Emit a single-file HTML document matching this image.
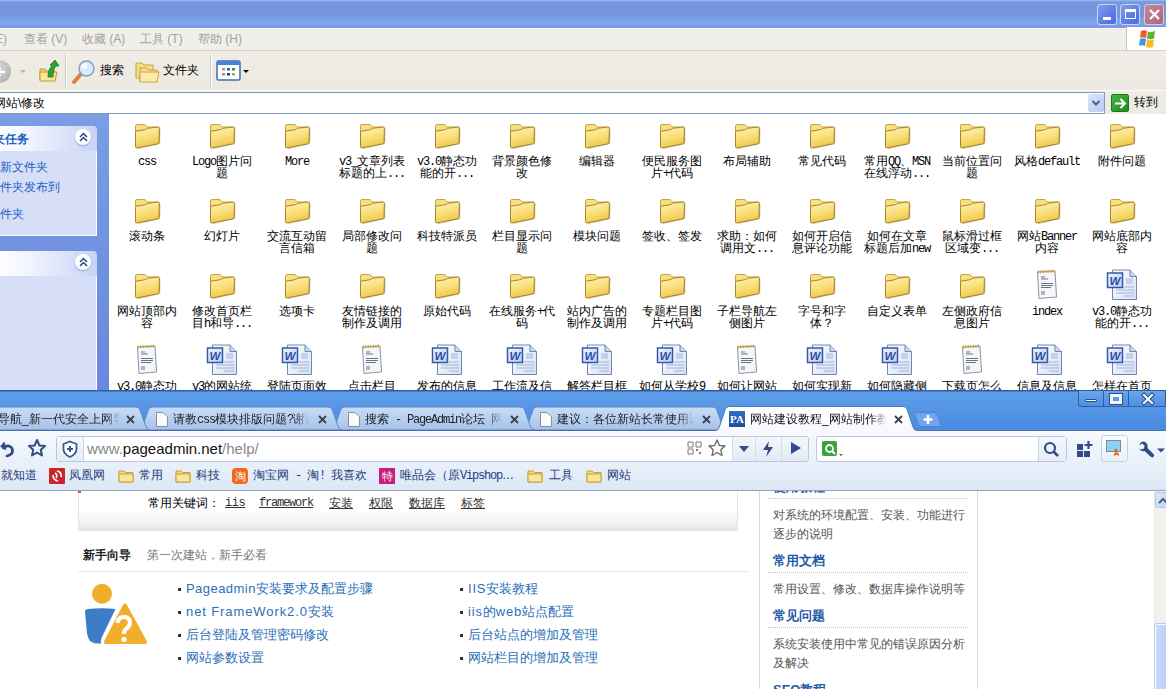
<!DOCTYPE html>
<html><head><meta charset="utf-8">
<style>
*{box-sizing:border-box}
html,body{margin:0;padding:0}
body{width:1166px;height:689px;overflow:hidden;position:relative;background:#fff;font-family:"Liberation Sans",sans-serif;font-size:12px;color:#000}
.a{position:absolute}
.ic{position:absolute;overflow:visible}
.lb{position:absolute;width:76px;text-align:center;font-family:"Liberation Mono",monospace;font-size:12px;line-height:12px;color:#000;white-space:nowrap}
.ml{letter-spacing:-1.2px}
#xtitle{left:0;top:0;width:1166px;height:28px;background:linear-gradient(to bottom,#9abaf4 0,#7898e0 2px,#7494dd 8px,#7595df 16px,#79a0e6 19px,#80a7ee 24px,#7b95e2 27px,#8a9fe6 28px)}
.tb{position:absolute;top:4px;width:20px;height:21px;border:1px solid #c7d6f8;border-radius:3px;background:linear-gradient(135deg,#7f9ef0,#5577e0 70%,#4f6fd8)}
#xmenu{left:0;top:28px;width:1166px;height:23px;background:#f0efe9;border-top:1px solid #f7f6f3;border-bottom:1px solid #d6d3c6}
.mi{position:absolute;top:5px;color:#a3a29c;font-size:12px;line-height:14px;white-space:nowrap}
#xtool{left:0;top:51px;width:1166px;height:39px;background:linear-gradient(to bottom,#efede6,#ebe9e0)}
.sep{position:absolute;width:2px;border-left:1px solid #cfccbe;border-right:1px solid #fff}
#xaddr{left:0;top:90px;width:1166px;height:24px;background:#edebe3;border-top:1px solid #fdfdfb}
#xleft{left:0;top:114px;width:109px;height:276px;background:linear-gradient(to bottom,#7b9de4,#7090e0 60%,#6a88de)}
.ph{position:absolute;left:-6px;width:103px;height:25px;border-radius:0 4px 0 0;background:linear-gradient(to right,#ffffff 0,#f1f4fd 35%,#c6d3f6 100%)}
.pb{position:absolute;left:-6px;width:103px;background:#d6dff7;border:1px solid #fff;border-top:0}
.chev{position:absolute;left:81px;top:3px;width:16px;height:16px;border-radius:50%;background:#fff;box-shadow:0 1px 2px #8fa4d8}
.pl{position:absolute;color:#215dc6;font-size:12px;line-height:14px;white-space:nowrap}
#bframe{left:0;top:390px;width:1166px;height:41px;background:linear-gradient(to bottom,#2e5da6 0,#2e5da6 1px,#5d9ce9 2px,#5696e6 18px,#4b8be1 40px,#3c6fb8 41px)}
.tab{position:absolute;top:407px;height:24px}
.ttx{position:absolute;top:5px;font-size:12px;line-height:14px;white-space:nowrap;color:#1a1a1a;overflow:hidden;-webkit-mask-image:linear-gradient(to right,#000 calc(100% - 16px),transparent 100%);mask-image:linear-gradient(to right,#000 calc(100% - 16px),transparent 100%)}
#btool{left:0;top:430px;width:1166px;height:61px;background:linear-gradient(to bottom,#f7fafd 0,#eaf1fa 30px,#dce7f6 60px,#98a4b4 60px)}
.bk{position:absolute;top:468px;font-size:12px;line-height:12px;white-space:nowrap;color:#1f3a78}
.lk{position:absolute;font-size:13px;line-height:15px;color:#2a6fb8;white-space:nowrap}
.bul{position:absolute;width:3px;height:3px;background:#333}
i{font-style:normal;display:inline-block;width:1em;text-align:center;text-decoration:inherit}
</style></head><body>
<svg width="0" height="0" style="position:absolute">
<defs>
<linearGradient id="fg" x1="0" y1="0" x2="0.3" y2="1"><stop offset="0" stop-color="#fff4b8"/><stop offset="0.55" stop-color="#f9e07e"/><stop offset="1" stop-color="#efc84a"/></linearGradient>
<linearGradient id="fb" x1="0" y1="0" x2="0" y2="1"><stop offset="0" stop-color="#fbe7a0"/><stop offset="1" stop-color="#e9c65a"/></linearGradient>
<linearGradient id="wg" x1="0" y1="0" x2="1" y2="1"><stop offset="0" stop-color="#ffffff"/><stop offset="1" stop-color="#d5e0f3"/></linearGradient>
<linearGradient id="wb" x1="0" y1="0" x2="1" y2="1"><stop offset="0" stop-color="#f4f7fd"/><stop offset="1" stop-color="#b8cbef"/></linearGradient>
<symbol id="fold" viewBox="0 0 27 25">
<path d="M1.5,8 V2 Q1.5,0.5 3,0.5 H10 Q11,0.5 12,1.5 L13.5,3 H23.5 Q25,3 25,4.5 V18 L1.5,22 Z" fill="#f8df80" stroke="#c9a443" stroke-width="1"/>
<path d="M1.5,8.5 Q1.5,7 3,7 L10.5,5.8 Q12.3,5.5 13.5,4.3 L24,3 Q25.4,2.9 25.4,4.2 L25,18.5 Q25,19.6 23.9,19.8 L3,23.9 Q1.5,24.2 1.5,22.6 Z" fill="url(#fg)" stroke="#a98525" stroke-width="1"/>
<path d="M26,4.5 L25.7,19.7 L4,24.6" stroke="#8f7a45" stroke-width="0.9" fill="none" opacity=".45"/>
</symbol>
<symbol id="note" viewBox="0 0 32 32">
<path d="M6.5,3 L24,2 L25.5,28 L8,29.5 Z" fill="#f5f6f9" stroke="#8c93a3"/>
<path d="M6.5,3 L24,2" stroke="#c7a545" stroke-width="2.6" stroke-dasharray="1.6,0.9"/>
<path d="M10,8 H14 M10,10 H17 M10,14.5 H22 M10,16.5 H22 M10,18.5 H20 M10,23 H14 M10,25 H14" stroke="#6b7283" stroke-width="1"/>
</symbol>
<symbol id="word" viewBox="0 0 32 32">
<path d="M6.5,1 H24 L30.5,7.5 V30.5 H6.5 Z" fill="url(#wg)" stroke="#6f86b5"/>
<path d="M24,1 V7.5 H30.5" fill="#c8d6ee" stroke="#6f86b5"/>
<rect x="20" y="9" width="7" height="6" fill="#c3d2ec"/>
<path d="M18,18 H28 M10,21 H28 M10,24 H28 M18,27 H28" stroke="#9fb4d8"/>
<rect x="1.5" y="4" width="15" height="14.5" fill="url(#wb)" stroke="#3558ad" stroke-width="1.5"/>
<text x="9" y="16" font-family="Liberation Sans" font-weight="bold" font-style="italic" font-size="11.5" fill="#2a4ea6" text-anchor="middle">W</text>
</symbol>
</defs></svg>

<!-- ========== EXPLORER ========== -->
<div id="xtitle" class="a"></div>
<div class="tb" style="left:1097px"><div class="a" style="left:5px;top:12px;width:8px;height:3px;background:#fff"></div></div>
<div class="tb" style="left:1120px"><div class="a" style="left:4px;top:4px;width:11px;height:10px;border:1px solid #fff;border-top:3px solid #fff"></div></div>
<div class="tb" style="left:1144px;background:linear-gradient(135deg,#c58aa0,#b56f84 70%,#aa6479);border-color:#e2c8d6"><svg class="a" style="left:3px;top:3px" width="13" height="13"><path d="M2,2 L11,11 M11,2 L2,11" stroke="#fff" stroke-width="2.2"/></svg></div>

<div id="xmenu" class="a"></div>
<div class="mi" style="left:-9px;top:32px">(E)</div>
<div class="mi" style="left:24px;top:32px"><i>查</i><i>看</i> (V)</div>
<div class="mi" style="left:82px;top:32px"><i>收</i><i>藏</i> (A)</div>
<div class="mi" style="left:140px;top:32px"><i>工</i><i>具</i> (T)</div>
<div class="mi" style="left:198px;top:32px"><i>帮</i><i>助</i> (H)</div>
<div class="a" style="left:1126px;top:27px;width:1px;height:23px;background:#c9c5b4"></div>
<div class="a" style="left:1127px;top:27px;width:39px;height:23px;background:#fff"></div>
<svg class="a" style="left:1137px;top:29px" width="22" height="20" viewBox="0 0 22 20">
<path d="M4,2 Q7,0.5 10,2 L9,9 Q6,7.5 3,9 Z" fill="#ee5a24"/>
<path d="M11,2.5 Q14,4 18,2 L17,9.5 Q13.5,11 10,9.5 Z" fill="#5db22e"/>
<path d="M3,10 Q6,8.5 9,10 L8,17 Q5,15.5 2,17 Z" fill="#3b9ae4"/>
<path d="M10,10.5 Q13.5,12 17,10.5 L16,18 Q12.5,19.5 9,18 Z" fill="#f5be1b"/>
</svg>

<div id="xtool" class="a"></div>
<div class="a" style="left:-12px;top:60px;width:23px;height:23px;border-radius:50%;background:radial-gradient(circle at 40% 35%,#dcdcdc,#a6a6a6)"></div><svg class="a" style="left:-6px;top:65px" width="14" height="14"><path d="M11,7 H3 M6.5,3 L2.5,7 L6.5,11" stroke="#fff" stroke-width="2.4" fill="none"/></svg>
<div class="a" style="left:20px;top:70px;width:0;height:0;border-left:3px solid transparent;border-right:3px solid transparent;border-top:3px solid #b5b5b5"></div>
<svg class="a" style="left:38px;top:59px" width="22" height="24" viewBox="0 0 22 24">
<path d="M2,10 H7 L9,12 H17 V21 H2 Z" fill="#f3d36a" stroke="#c49a2f"/>
<path d="M2,13 H19 L17,22 H2 Z" fill="#f9e596" stroke="#c49a2f"/>
<path d="M10,18 Q10,10 14,7 L12,6 L17,1 L21,7 L18,7 Q15,10 15,18 Z" fill="#2fa32f" stroke="#1b7a1b" stroke-width="0.8"/>
</svg>
<div class="sep" style="left:65px;top:54px;height:34px"></div>
<svg class="a" style="left:71px;top:59px" width="26" height="26" viewBox="0 0 26 26">
<line x1="3" y1="23" x2="10" y2="15" stroke="#d9843a" stroke-width="4" stroke-linecap="round"/>
<circle cx="15.5" cy="9.5" r="7.5" fill="#d4ecfb" stroke="#7c9ec6" stroke-width="1.4"/>
<circle cx="13.5" cy="7.5" r="3" fill="#fff" opacity=".8"/>
</svg>
<div class="a" style="left:100px;top:64px;font-size:12px;line-height:13px;color:#000"><i>搜</i><i>索</i></div>
<svg class="a" style="left:135px;top:60px" width="26" height="24" viewBox="0 0 26 24">
<path d="M1,3 H7 L9,5 H18 V18 H1 Z" fill="#f5dc86" stroke="#c7a23e"/>
<path d="M5,8 H11 L13,10 H22 V21 H5 Z" fill="#f7e08e" stroke="#c7a23e"/>
<path d="M5,12 H24 L22,22 H5 Z" fill="#fbeaa8" stroke="#c7a23e"/>
</svg>
<div class="a" style="left:163px;top:64px;font-size:12px;line-height:13px;color:#000"><i>文</i><i>件</i><i>夹</i></div>
<div class="sep" style="left:210px;top:54px;height:34px"></div>
<svg class="a" style="left:216px;top:60px" width="26" height="22" viewBox="0 0 26 22">
<rect x="1" y="1" width="23" height="19" rx="1.5" fill="#fff" stroke="#3a6cc0" stroke-width="1.5"/>
<rect x="1" y="1" width="23" height="4" fill="#4d7fd3"/>
<rect x="6" y="8" width="3" height="2.5" fill="#8a98c8"/><rect x="11" y="8" width="3" height="2.5" fill="#2c62c0"/><rect x="16" y="8" width="3" height="2.5" fill="#2f9a42"/>
<rect x="6" y="13" width="3" height="2.5" fill="#e07a4a"/><rect x="11" y="13" width="3" height="2.5" fill="#233f95"/><rect x="16" y="13" width="3" height="2.5" fill="#c9a23e"/>
</svg>
<div class="a" style="left:243px;top:70px;width:0;height:0;border-left:3px solid transparent;border-right:3px solid transparent;border-top:3px solid #000"></div>

<div id="xaddr" class="a"></div>
<div class="a" style="left:-2px;top:92px;width:1107px;height:22px;background:#fff;border:1px solid #7f9db9"></div>
<div class="a" style="left:-6px;top:97px;font-size:12px;line-height:13px"><i>网</i><i>站</i>\<i>修</i><i>改</i></div>
<div class="a" style="left:1088px;top:94px;width:16px;height:18px;border-radius:2px;background:linear-gradient(135deg,#dbe4fb,#b9cbf5)"><svg class="a" style="left:3px;top:5px" width="10" height="8"><path d="M1.5,2 L5,5.5 L8.5,2" stroke="#4d6185" stroke-width="2" fill="none"/></svg></div>
<div class="a" style="left:1111px;top:94px;width:18px;height:18px;border-radius:2px;background:linear-gradient(135deg,#43b843,#1c8c1c);border:1px solid #1b7a1b"><svg class="a" style="left:2px;top:2px" width="13" height="13"><path d="M1,6.5 H11 M6.5,2 L11,6.5 L6.5,11" stroke="#fff" stroke-width="2" fill="none"/></svg></div>
<div class="a" style="left:1134px;top:96px;font-size:12px;line-height:13px"><i>转</i><i>到</i></div>

<div id="xleft" class="a"></div>
<div class="ph" style="top:126px"><div class="a" style="left:-1px;top:6px;font-weight:bold;color:#215dc6;font-size:12px;line-height:14px"><i>夹</i><i>任</i><i>务</i></div><div class="chev"><svg class="a" style="left:4px;top:3px" width="9" height="11"><path d="M1,5 L4.5,1.5 L8,5 M1,9 L4.5,5.5 L8,9" stroke="#28428a" stroke-width="1.5" fill="none"/></svg></div></div>
<div class="pb" style="top:151px;height:85px"></div>
<div class="pl" style="left:0;top:160px"><i>新</i><i>文</i><i>件</i><i>夹</i></div>
<div class="pl" style="left:0px;top:180px"><i>件</i><i>夹</i><i>发</i><i>布</i><i>到</i></div>
<div class="pl" style="left:0px;top:207px"><i>件</i><i>夹</i></div>
<div class="ph" style="top:251px"><div class="chev"><svg class="a" style="left:4px;top:3px" width="9" height="11"><path d="M1,5 L4.5,1.5 L8,5 M1,9 L4.5,5.5 L8,9" stroke="#28428a" stroke-width="1.5" fill="none"/></svg></div></div>
<div class="pb" style="top:276px;height:120px"></div>

<div class="a" style="left:109px;top:114px;width:1057px;height:276px;background:#fff;overflow:hidden">
<div class="a" style="left:-109px;top:-114px;width:1166px;height:390px">
<svg class="ic" style="left:134px;top:124px" width="27" height="25"><use href="#fold"/></svg><div class="lb" style="left:109px;top:156px"><span class="ml">css</span></div>
<svg class="ic" style="left:209px;top:124px" width="27" height="25"><use href="#fold"/></svg><div class="lb" style="left:184px;top:156px"><span class="ml">Logo</span><i>图</i><i>片</i><i>问</i><br><i>题</i></div>
<svg class="ic" style="left:284px;top:124px" width="27" height="25"><use href="#fold"/></svg><div class="lb" style="left:259px;top:156px"><span class="ml">More</span></div>
<svg class="ic" style="left:359px;top:124px" width="27" height="25"><use href="#fold"/></svg><div class="lb" style="left:334px;top:156px"><span class="ml">v3_</span><i>文</i><i>章</i><i>列</i><i>表</i><br><i>标</i><i>题</i><i>的</i><i>上</i><span class="ml">...</span></div>
<svg class="ic" style="left:434px;top:124px" width="27" height="25"><use href="#fold"/></svg><div class="lb" style="left:409px;top:156px"><span class="ml">v3.0</span><i>静</i><i>态</i><i>功</i><br><i>能</i><i>的</i><i>开</i><span class="ml">...</span></div>
<svg class="ic" style="left:509px;top:124px" width="27" height="25"><use href="#fold"/></svg><div class="lb" style="left:484px;top:156px"><i>背</i><i>景</i><i>颜</i><i>色</i><i>修</i><br><i>改</i></div>
<svg class="ic" style="left:584px;top:124px" width="27" height="25"><use href="#fold"/></svg><div class="lb" style="left:559px;top:156px"><i>编</i><i>辑</i><i>器</i></div>
<svg class="ic" style="left:659px;top:124px" width="27" height="25"><use href="#fold"/></svg><div class="lb" style="left:634px;top:156px"><i>便</i><i>民</i><i>服</i><i>务</i><i>图</i><br><i>片</i><span class="ml">+</span><i>代</i><i>码</i></div>
<svg class="ic" style="left:734px;top:124px" width="27" height="25"><use href="#fold"/></svg><div class="lb" style="left:709px;top:156px"><i>布</i><i>局</i><i>辅</i><i>助</i></div>
<svg class="ic" style="left:809px;top:124px" width="27" height="25"><use href="#fold"/></svg><div class="lb" style="left:784px;top:156px"><i>常</i><i>见</i><i>代</i><i>码</i></div>
<svg class="ic" style="left:884px;top:124px" width="27" height="25"><use href="#fold"/></svg><div class="lb" style="left:859px;top:156px"><i>常</i><i>用</i><span class="ml">QQ</span><i>、</i><span class="ml">MSN</span><br><i>在</i><i>线</i><i>浮</i><i>动</i><span class="ml">...</span></div>
<svg class="ic" style="left:959px;top:124px" width="27" height="25"><use href="#fold"/></svg><div class="lb" style="left:934px;top:156px"><i>当</i><i>前</i><i>位</i><i>置</i><i>问</i><br><i>题</i></div>
<svg class="ic" style="left:1034px;top:124px" width="27" height="25"><use href="#fold"/></svg><div class="lb" style="left:1009px;top:156px"><i>风</i><i>格</i><span class="ml">default</span></div>
<svg class="ic" style="left:1109px;top:124px" width="27" height="25"><use href="#fold"/></svg><div class="lb" style="left:1084px;top:156px"><i>附</i><i>件</i><i>问</i><i>题</i></div>
<svg class="ic" style="left:134px;top:199px" width="27" height="25"><use href="#fold"/></svg><div class="lb" style="left:109px;top:231px"><i>滚</i><i>动</i><i>条</i></div>
<svg class="ic" style="left:209px;top:199px" width="27" height="25"><use href="#fold"/></svg><div class="lb" style="left:184px;top:231px"><i>幻</i><i>灯</i><i>片</i></div>
<svg class="ic" style="left:284px;top:199px" width="27" height="25"><use href="#fold"/></svg><div class="lb" style="left:259px;top:231px"><i>交</i><i>流</i><i>互</i><i>动</i><i>留</i><br><i>言</i><i>信</i><i>箱</i></div>
<svg class="ic" style="left:359px;top:199px" width="27" height="25"><use href="#fold"/></svg><div class="lb" style="left:334px;top:231px"><i>局</i><i>部</i><i>修</i><i>改</i><i>问</i><br><i>题</i></div>
<svg class="ic" style="left:434px;top:199px" width="27" height="25"><use href="#fold"/></svg><div class="lb" style="left:409px;top:231px"><i>科</i><i>技</i><i>特</i><i>派</i><i>员</i></div>
<svg class="ic" style="left:509px;top:199px" width="27" height="25"><use href="#fold"/></svg><div class="lb" style="left:484px;top:231px"><i>栏</i><i>目</i><i>显</i><i>示</i><i>问</i><br><i>题</i></div>
<svg class="ic" style="left:584px;top:199px" width="27" height="25"><use href="#fold"/></svg><div class="lb" style="left:559px;top:231px"><i>模</i><i>块</i><i>问</i><i>题</i></div>
<svg class="ic" style="left:659px;top:199px" width="27" height="25"><use href="#fold"/></svg><div class="lb" style="left:634px;top:231px"><i>签</i><i>收</i><i>、</i><i>签</i><i>发</i></div>
<svg class="ic" style="left:734px;top:199px" width="27" height="25"><use href="#fold"/></svg><div class="lb" style="left:709px;top:231px"><i>求</i><i>助</i><i>：</i><i>如</i><i>何</i><br><i>调</i><i>用</i><i>文</i><span class="ml">...</span></div>
<svg class="ic" style="left:809px;top:199px" width="27" height="25"><use href="#fold"/></svg><div class="lb" style="left:784px;top:231px"><i>如</i><i>何</i><i>开</i><i>启</i><i>信</i><br><i>息</i><i>评</i><i>论</i><i>功</i><i>能</i></div>
<svg class="ic" style="left:884px;top:199px" width="27" height="25"><use href="#fold"/></svg><div class="lb" style="left:859px;top:231px"><i>如</i><i>何</i><i>在</i><i>文</i><i>章</i><br><i>标</i><i>题</i><i>后</i><i>加</i><span class="ml">new</span></div>
<svg class="ic" style="left:959px;top:199px" width="27" height="25"><use href="#fold"/></svg><div class="lb" style="left:934px;top:231px"><i>鼠</i><i>标</i><i>滑</i><i>过</i><i>框</i><br><i>区</i><i>域</i><i>变</i><span class="ml">...</span></div>
<svg class="ic" style="left:1034px;top:199px" width="27" height="25"><use href="#fold"/></svg><div class="lb" style="left:1009px;top:231px"><i>网</i><i>站</i><span class="ml">Banner</span><br><i>内</i><i>容</i></div>
<svg class="ic" style="left:1109px;top:199px" width="27" height="25"><use href="#fold"/></svg><div class="lb" style="left:1084px;top:231px"><i>网</i><i>站</i><i>底</i><i>部</i><i>内</i><br><i>容</i></div>
<svg class="ic" style="left:134px;top:274px" width="27" height="25"><use href="#fold"/></svg><div class="lb" style="left:109px;top:306px"><i>网</i><i>站</i><i>顶</i><i>部</i><i>内</i><br><i>容</i></div>
<svg class="ic" style="left:209px;top:274px" width="27" height="25"><use href="#fold"/></svg><div class="lb" style="left:184px;top:306px"><i>修</i><i>改</i><i>首</i><i>页</i><i>栏</i><br><i>目</i><span class="ml">h</span><i>和</i><i>导</i><span class="ml">...</span></div>
<svg class="ic" style="left:284px;top:274px" width="27" height="25"><use href="#fold"/></svg><div class="lb" style="left:259px;top:306px"><i>选</i><i>项</i><i>卡</i></div>
<svg class="ic" style="left:359px;top:274px" width="27" height="25"><use href="#fold"/></svg><div class="lb" style="left:334px;top:306px"><i>友</i><i>情</i><i>链</i><i>接</i><i>的</i><br><i>制</i><i>作</i><i>及</i><i>调</i><i>用</i></div>
<svg class="ic" style="left:434px;top:274px" width="27" height="25"><use href="#fold"/></svg><div class="lb" style="left:409px;top:306px"><i>原</i><i>始</i><i>代</i><i>码</i></div>
<svg class="ic" style="left:509px;top:274px" width="27" height="25"><use href="#fold"/></svg><div class="lb" style="left:484px;top:306px"><i>在</i><i>线</i><i>服</i><i>务</i><span class="ml">+</span><i>代</i><br><i>码</i></div>
<svg class="ic" style="left:584px;top:274px" width="27" height="25"><use href="#fold"/></svg><div class="lb" style="left:559px;top:306px"><i>站</i><i>内</i><i>广</i><i>告</i><i>的</i><br><i>制</i><i>作</i><i>及</i><i>调</i><i>用</i></div>
<svg class="ic" style="left:659px;top:274px" width="27" height="25"><use href="#fold"/></svg><div class="lb" style="left:634px;top:306px"><i>专</i><i>题</i><i>栏</i><i>目</i><i>图</i><br><i>片</i><span class="ml">+</span><i>代</i><i>码</i></div>
<svg class="ic" style="left:734px;top:274px" width="27" height="25"><use href="#fold"/></svg><div class="lb" style="left:709px;top:306px"><i>子</i><i>栏</i><i>导</i><i>航</i><i>左</i><br><i>侧</i><i>图</i><i>片</i></div>
<svg class="ic" style="left:809px;top:274px" width="27" height="25"><use href="#fold"/></svg><div class="lb" style="left:784px;top:306px"><i>字</i><i>号</i><i>和</i><i>字</i><br><i>体</i><i>？</i></div>
<svg class="ic" style="left:884px;top:274px" width="27" height="25"><use href="#fold"/></svg><div class="lb" style="left:859px;top:306px"><i>自</i><i>定</i><i>义</i><i>表</i><i>单</i></div>
<svg class="ic" style="left:959px;top:274px" width="27" height="25"><use href="#fold"/></svg><div class="lb" style="left:934px;top:306px"><i>左</i><i>侧</i><i>政</i><i>府</i><i>信</i><br><i>息</i><i>图</i><i>片</i></div>
<svg class="ic" style="left:1031px;top:269px" width="32" height="32"><use href="#note"/></svg><div class="lb" style="left:1009px;top:306px"><span class="ml">index</span></div>
<svg class="ic" style="left:1106px;top:269px" width="32" height="32"><use href="#word"/></svg><div class="lb" style="left:1084px;top:306px"><span class="ml">v3.0</span><i>静</i><i>态</i><i>功</i><br><i>能</i><i>的</i><i>开</i><span class="ml">...</span></div>
<svg class="ic" style="left:131px;top:344px" width="32" height="32"><use href="#note"/></svg><div class="lb" style="left:109px;top:381px"><span class="ml">v3.0</span><i>静</i><i>态</i><i>功</i></div>
<svg class="ic" style="left:206px;top:344px" width="32" height="32"><use href="#word"/></svg><div class="lb" style="left:184px;top:381px"><span class="ml">v3</span><i>的</i><i>网</i><i>站</i><i>统</i></div>
<svg class="ic" style="left:281px;top:344px" width="32" height="32"><use href="#word"/></svg><div class="lb" style="left:259px;top:381px"><i>登</i><i>陆</i><i>页</i><i>面</i><i>效</i></div>
<svg class="ic" style="left:356px;top:344px" width="32" height="32"><use href="#note"/></svg><div class="lb" style="left:334px;top:381px"><i>点</i><i>击</i><i>栏</i><i>目</i></div>
<svg class="ic" style="left:431px;top:344px" width="32" height="32"><use href="#word"/></svg><div class="lb" style="left:409px;top:381px"><i>发</i><i>布</i><i>的</i><i>信</i><i>息</i></div>
<svg class="ic" style="left:506px;top:344px" width="32" height="32"><use href="#word"/></svg><div class="lb" style="left:484px;top:381px"><i>工</i><i>作</i><i>流</i><i>及</i><i>信</i></div>
<svg class="ic" style="left:581px;top:344px" width="32" height="32"><use href="#word"/></svg><div class="lb" style="left:559px;top:381px"><i>解</i><i>答</i><i>栏</i><i>目</i><i>框</i></div>
<svg class="ic" style="left:656px;top:344px" width="32" height="32"><use href="#word"/></svg><div class="lb" style="left:634px;top:381px"><i>如</i><i>何</i><i>从</i><i>学</i><i>校</i><span class="ml">9</span></div>
<svg class="ic" style="left:731px;top:344px" width="32" height="32"><use href="#note"/></svg><div class="lb" style="left:709px;top:381px"><i>如</i><i>何</i><i>让</i><i>网</i><i>站</i></div>
<svg class="ic" style="left:806px;top:344px" width="32" height="32"><use href="#word"/></svg><div class="lb" style="left:784px;top:381px"><i>如</i><i>何</i><i>实</i><i>现</i><i>新</i></div>
<svg class="ic" style="left:881px;top:344px" width="32" height="32"><use href="#word"/></svg><div class="lb" style="left:859px;top:381px"><i>如</i><i>何</i><i>隐</i><i>藏</i><i>侧</i></div>
<svg class="ic" style="left:956px;top:344px" width="32" height="32"><use href="#note"/></svg><div class="lb" style="left:934px;top:381px"><i>下</i><i>载</i><i>页</i><i>怎</i><i>么</i></div>
<svg class="ic" style="left:1031px;top:344px" width="32" height="32"><use href="#word"/></svg><div class="lb" style="left:1009px;top:381px"><i>信</i><i>息</i><i>及</i><i>信</i><i>息</i></div>
<svg class="ic" style="left:1106px;top:344px" width="32" height="32"><use href="#word"/></svg><div class="lb" style="left:1084px;top:381px"><i>怎</i><i>样</i><i>在</i><i>首</i><i>页</i></div>
</div></div>

<!-- ========== BROWSER ========== -->
<div id="bframe" class="a"></div>
<div class="a" style="left:1078px;top:391px;width:88px;height:16px;border:1px solid #2f5fa3;border-top:0;border-radius:0 0 0 3px;background:linear-gradient(to bottom,#6aa5ec,#4f8fe3)"></div>
<div class="a" style="left:1103px;top:391px;width:1px;height:16px;background:#2f5fa3"></div>
<div class="a" style="left:1128px;top:391px;width:1px;height:16px;background:#2f5fa3"></div>
<div class="a" style="left:1085px;top:399px;width:12px;height:3px;background:#f3f6fb;border:1px solid #2c4f86;border-radius:1px"></div>
<div class="a" style="left:1110px;top:394px;width:12px;height:10px;border:3px solid #f3f6fb;outline:1px solid #2c4f86"></div>
<svg class="a" style="left:1141px;top:392px" width="14" height="14"><path d="M3,3 L11,11 M11,3 L3,11" stroke="#2c4f86" stroke-width="4.2" stroke-linecap="square"/><path d="M3,3 L11,11 M11,3 L3,11" stroke="#f3f6fb" stroke-width="2.2" stroke-linecap="square"/></svg>

<div id="btool" class="a"></div>
<svg class="a" style="left:0;top:405px" width="1166" height="27">
<defs><linearGradient id="tgi" x1="0" y1="0" x2="0" y2="1"><stop offset="0" stop-color="#c9ddf6"/><stop offset="1" stop-color="#a6c2eb"/></linearGradient>
<linearGradient id="tga" x1="0" y1="0" x2="0" y2="1"><stop offset="0" stop-color="#ffffff"/><stop offset="1" stop-color="#f6f9fd"/></linearGradient></defs>
<path d="M522.9,25 Q525.9,25 526.9,22 L532.9,5 Q533.9,2 536.9,2 H712.9 Q715.9,2 716.9,5 L722.9,22 Q723.9,25 726.9,25 Z" fill="url(#tgi)" stroke="#5f86c0" stroke-width="1"/>
<path d="M330.6,25 Q333.6,25 334.6,22 L340.6,5 Q341.6,2 344.6,2 H520.6 Q523.6,2 524.6,5 L530.6,22 Q531.6,25 534.6,25 Z" fill="url(#tgi)" stroke="#5f86c0" stroke-width="1"/>
<path d="M138.3,25 Q141.3,25 142.3,22 L148.3,5 Q149.3,2 152.3,2 H328.3 Q331.3,2 332.3,5 L338.3,22 Q339.3,25 342.3,25 Z" fill="url(#tgi)" stroke="#5f86c0" stroke-width="1"/>
<path d="M-54.0,25 Q-51.0,25 -50.0,22 L-44.0,5 Q-43.0,2 -40.0,2 H136.0 Q139.0,2 140.0,5 L146.0,22 Q147.0,25 150.0,25 Z" fill="url(#tgi)" stroke="#5f86c0" stroke-width="1"/>
<path d="M915,7.5 H934.5 Q936,7.5 937,9.5 L941,20 Q941.5,21.5 940,21.5 H921 Q919.5,21.5 919,20 L914.5,9.5 Q914,7.5 915,7.5 Z" fill="#72a6ec" stroke="#4f80c9" stroke-width="0.8"/>
<path d="M923.5,14.5 H932.5 M928,10 V19" stroke="#fff" stroke-width="2.6"/>
<path d="M0,25.5 H1166" stroke="#4a70a8" stroke-width="1"/>
<path d="M715.2,25.5 Q718.2,25.5 719.2,22.5 L725.2,4.5 Q726.2,1.5 729.2,1.5 H903.2 Q906.2,1.5 907.2,4.5 L913.2,22.5 Q914.2,25.5 917.2,25.5 V27 H715.2 Z" fill="url(#tga)"/><path d="M715.2,25.5 Q718.2,25.5 719.2,22.5 L725.2,4.5 Q726.2,1.5 729.2,1.5 H903.2 Q906.2,1.5 907.2,4.5 L913.2,22.5 Q914.2,25.5 917.2,25.5" fill="none" stroke="#4d78b8" stroke-width="1"/>
</svg>
<div class="ttx" style="left:-2px;top:412px;width:123px;color:#222"><i>导</i><i>航</i>_<i>新</i><i>一</i><i>代</i><i>安</i><i>全</i><i>上</i><i>网</i><i>导</i></div>
<svg class="a" style="left:126px;top:415px" width="9" height="9"><path d="M1,1 L8,8 M8,1 L1,8" stroke="#3a4150" stroke-width="1.8"/></svg>
<svg class="a" style="left:156px;top:412px" width="12" height="15"><path d="M0.5,0.5 H7 L11.5,5 V14.5 H0.5 Z" fill="#fbfbfb" stroke="#8d8f94"/></svg>
<div class="ttx" style="left:173px;top:412px;width:137px;color:#222"><i>请</i><i>教</i><span style="font-family:'Liberation Mono',monospace;letter-spacing:-1.2px">css</span><i>模</i><i>块</i><i>排</i><i>版</i><i>问</i><i>题</i><span style="font-family:'Liberation Mono',monospace;letter-spacing:-1.2px">?</span><i>谢</i><i>谢</i></div>
<svg class="a" style="left:318px;top:415px" width="9" height="9"><path d="M1,1 L8,8 M8,1 L1,8" stroke="#3a4150" stroke-width="1.8"/></svg>
<svg class="a" style="left:348px;top:412px" width="12" height="15"><path d="M0.5,0.5 H7 L11.5,5 V14.5 H0.5 Z" fill="#fbfbfb" stroke="#8d8f94"/></svg>
<div class="ttx" style="left:365px;top:412px;width:137px;color:#222"><i>搜</i><i>索</i><span style="font-family:'Liberation Mono',monospace;letter-spacing:-1.2px"> - PageAdmin</span><i>论</i><i>坛</i><span style="font-family:'Liberation Mono',monospace;letter-spacing:-1.2px"> </span><i>网</i><i>站</i></div>
<svg class="a" style="left:510px;top:415px" width="9" height="9"><path d="M1,1 L8,8 M8,1 L1,8" stroke="#3a4150" stroke-width="1.8"/></svg>
<svg class="a" style="left:540px;top:412px" width="12" height="15"><path d="M0.5,0.5 H7 L11.5,5 V14.5 H0.5 Z" fill="#fbfbfb" stroke="#8d8f94"/></svg>
<div class="ttx" style="left:557px;top:412px;width:137px;color:#222"><i>建</i><i>议</i><i>：</i><i>各</i><i>位</i><i>新</i><i>站</i><i>长</i><i>常</i><i>使</i><i>用</i><i>该</i></div>
<svg class="a" style="left:702px;top:415px" width="9" height="9"><path d="M1,1 L8,8 M8,1 L1,8" stroke="#3a4150" stroke-width="1.8"/></svg>
<div class="a" style="left:729px;top:411px;width:16px;height:16px;background:linear-gradient(to bottom,#2f6fc6,#1d4f9a);color:#fff;font-size:11px;font-weight:bold;line-height:16px;text-align:center;font-family:'Liberation Serif',serif;letter-spacing:0px">PA</div>
<div class="ttx" style="left:750px;top:412px;width:137px;color:#111"><i>网</i><i>站</i><i>建</i><i>设</i><i>教</i><i>程</i>_<i>网</i><i>站</i><i>制</i><i>作</i><i>教</i><i>程</i></div>
<svg class="a" style="left:894px;top:415px" width="9" height="9"><path d="M1,1 L8,8 M8,1 L1,8" stroke="#3a4150" stroke-width="1.8"/></svg>
<svg class="a" style="left:0;top:440px" width="16" height="18"><path d="M3.5,8 Q6,5.5 9,6 Q12.5,7 12.5,11 Q12.5,14.5 7,16" stroke="#2e4d86" stroke-width="2.8" fill="none" stroke-linecap="round"/><path d="M0,6.5 L4.5,1.5 L6.5,10.5 Z" fill="#2e4d86"/></svg>
<svg class="a" style="left:27px;top:438px" width="20" height="20"><path d="M10,2 L12.4,7.5 L18,8 L13.8,11.8 L15,17.5 L10,14.5 L5,17.5 L6.2,11.8 L2,8 L7.6,7.5 Z" fill="none" stroke="#2e4d86" stroke-width="2" stroke-linejoin="round"/></svg>
<div class="a" style="left:56px;top:436px;width:753px;height:26px;border:1px solid #b9c8dc;border-radius:3px;background:#fff"></div>
<div class="a" style="left:57px;top:437px;width:27px;height:24px;background:linear-gradient(to bottom,#f5f8fc,#e6edf7);border-right:1px solid #c7d3e3"></div>
<svg class="a" style="left:61px;top:440px" width="18" height="18"><path d="M9,1.5 L15.5,4 V9 Q15.5,14 9,17 Q2.5,14 2.5,9 V4 Z" fill="#fff" stroke="#3a5a8e" stroke-width="1.8"/><path d="M9,6 V12 M6,9 H12" stroke="#3a5a8e" stroke-width="2"/></svg>
<div class="a" style="left:87px;top:440px;font-size:15px;line-height:18px;white-space:nowrap;color:#111"><span style="color:#888">www.</span>pageadmin.net<span style="color:#888">/help/</span></div>
<svg class="a" style="left:687px;top:441px" width="16" height="14"><path d="M1,1h5v5h-5z M9,1h5v5h-5z M1,8h5v5h-5z" fill="none" stroke="#777"/><path d="M9,8h2v2h-2z M12,11h2v2h-2z" fill="#777"/></svg>
<svg class="a" style="left:707px;top:438px" width="20" height="20"><path d="M10,2 L12.4,7.5 L18,8 L13.8,11.8 L15,17.5 L10,14.5 L5,17.5 L6.2,11.8 L2,8 L7.6,7.5 Z" fill="#fff" stroke="#666" stroke-width="1.3" stroke-linejoin="round"/></svg>
<div class="a" style="left:732px;top:437px;width:76px;height:24px;background:linear-gradient(to bottom,#f4f7fb,#e3eaf4);border-radius:0 2px 2px 0"></div><div class="a" style="left:732px;top:437px;width:1px;height:24px;background:#d4dde9"></div>
<div class="a" style="left:755px;top:437px;width:1px;height:24px;background:#d4dde9"></div>
<div class="a" style="left:781px;top:437px;width:1px;height:24px;background:#d4dde9"></div>
<div class="a" style="left:739px;top:446px;width:0;height:0;border-left:5px solid transparent;border-right:5px solid transparent;border-top:6px solid #2e4d86"></div>
<svg class="a" style="left:761px;top:440px" width="14" height="18"><path d="M8,1 L2,10 H7 L5,17 L12,7 H7 Z" fill="#2e4d86"/></svg>
<svg class="a" style="left:790px;top:441px" width="12" height="14"><path d="M1,1 L11,7 L1,13 Z" fill="#2e4d86"/></svg>
<div class="a" style="left:816px;top:436px;width:251px;height:26px;border:1px solid #b9c8dc;border-radius:3px;background:#fff"></div>
<div class="a" style="left:1038px;top:437px;width:28px;height:24px;background:linear-gradient(to bottom,#f5f8fc,#e6edf7);border-left:1px solid #c7d3e3"></div>
<div class="a" style="left:822px;top:441px;width:15px;height:15px;border-radius:2px;background:#3aa33a"></div>
<svg class="a" style="left:824px;top:443px" width="20" height="16"><circle cx="5.5" cy="5.5" r="3.5" fill="none" stroke="#fff" stroke-width="1.8"/><path d="M8,8 L11,11" stroke="#fff" stroke-width="2"/><path d="M15,11 L19,11 L17,13 Z" fill="#555"/></svg>
<svg class="a" style="left:1043px;top:441px" width="18" height="18"><circle cx="7" cy="7" r="5" fill="none" stroke="#2e4d86" stroke-width="2.2"/><path d="M10.5,10.5 L15,15" stroke="#2e4d86" stroke-width="2.6"/></svg>
<svg class="a" style="left:1076px;top:440px" width="18" height="18"><rect x="1" y="4" width="6" height="6" fill="#2e4d86"/><rect x="1" y="11" width="6" height="6" fill="#2e4d86"/><rect x="8" y="11" width="6" height="6" fill="#2e4d86"/><path d="M12.5,1 V9 M8.5,5 H16.5" stroke="#2e4d86" stroke-width="2.2"/></svg>
<div class="a" style="left:1101px;top:435px;width:27px;height:27px;border:1px solid #c6d2e2;border-radius:3px;background:linear-gradient(to bottom,#fbfdff,#e9f0f9)"></div>
<svg class="a" style="left:1105px;top:439px" width="20" height="18"><rect x="1.5" y="1.5" width="14" height="11" fill="#8fd0f5" stroke="#7a8aa0"/><path d="M10,10 Q13,14 9,16 M12,10 Q9,14 14,16" stroke="#d9701e" stroke-width="2" fill="none"/></svg>
<svg class="a" style="left:1138px;top:440px" width="28" height="18"><path d="M6,1.5 Q2,1.5 1.5,5.5 L4,3.5 L6.5,5.5 L6,8.5 L3,9.5 L1.5,8 Q2.5,12 6.5,11 L13,17 Q14.5,18 15.8,16.5 Q16.8,15 15.5,14 L9.5,8 Q10.5,3 6,1.5 Z" fill="#2e4d86"/><path d="M19,8.5 H27 L23,12.5 Z" fill="#2e4d86"/></svg>

<!-- bookmarks -->
<div class="bk" style="top:470px;left:1px;top:469px"><i>就</i><i>知</i><i>道</i></div>
<div class="a" style="left:49px;top:468px;width:16px;height:16px;background:#c8262a;border-radius:1px"><svg class="a" style="left:1px;top:1px" width="14" height="14"><path d="M7,2 Q12,3 11,8 M3,6 Q3,11 8,12 M5,4 Q8,6 6,9" stroke="#fff" stroke-width="1.6" fill="none"/></svg></div>
<div class="bk" style="top:470px;left:69px;top:469px"><i>凤</i><i>凰</i><i>网</i></div>
<svg class="a" style="left:118px;top:469px" width="16" height="14"><path d="M1,2 H6 L7.5,3.5 H15 V13 H1 Z" fill="#f7d97c" stroke="#c79f3b"/><path d="M1,5 H15 V13 H1 Z" fill="#fbe59b" stroke="#c79f3b"/></svg>
<div class="bk" style="top:470px;left:139px;top:469px"><i>常</i><i>用</i></div>
<svg class="a" style="left:175px;top:469px" width="16" height="14"><path d="M1,2 H6 L7.5,3.5 H15 V13 H1 Z" fill="#f7d97c" stroke="#c79f3b"/><path d="M1,5 H15 V13 H1 Z" fill="#fbe59b" stroke="#c79f3b"/></svg>
<div class="bk" style="top:470px;left:196px;top:469px"><i>科</i><i>技</i></div>
<div class="a" style="left:232px;top:468px;width:16px;height:16px;background:#ef6a1c;border-radius:4px;color:#fff;font-size:11px;line-height:16px;text-align:center"><i>淘</i></div>
<div class="bk" style="top:470px;left:253px;top:469px"><i>淘</i><i>宝</i><i>网</i><span style="font-family:'Liberation Mono',monospace;letter-spacing:-1.2px"> - </span><i>淘</i><span style="font-family:'Liberation Mono',monospace;letter-spacing:-1.2px">! </span><i>我</i><i>喜</i><i>欢</i></div>
<div class="a" style="left:379px;top:468px;width:16px;height:16px;background:#cc1a7e;color:#fff;font-size:11px;line-height:16px;text-align:center"><i>特</i></div>
<div class="bk" style="top:470px;left:400px;top:469px"><i>唯</i><i>品</i><i>会</i><i>（</i><i>原</i><span style="font-family:'Liberation Mono',monospace;letter-spacing:-1.2px">Vipshop</span>…</div>
<svg class="a" style="left:527px;top:469px" width="16" height="14"><path d="M1,2 H6 L7.5,3.5 H15 V13 H1 Z" fill="#f7d97c" stroke="#c79f3b"/><path d="M1,5 H15 V13 H1 Z" fill="#fbe59b" stroke="#c79f3b"/></svg>
<div class="bk" style="top:470px;left:549px;top:469px"><i>工</i><i>具</i></div>
<svg class="a" style="left:586px;top:469px" width="16" height="14"><path d="M1,2 H6 L7.5,3.5 H15 V13 H1 Z" fill="#f7d97c" stroke="#c79f3b"/><path d="M1,5 H15 V13 H1 Z" fill="#fbe59b" stroke="#c79f3b"/></svg>
<div class="bk" style="top:470px;left:607px;top:469px"><i>网</i><i>站</i></div>

<!-- ========== PAGE CONTENT ========== -->
<div class="a" style="left:0;top:491px;width:1166px;height:198px;overflow:hidden;background:#fff"><div class="a" style="left:0;top:-491px;width:1166px;height:689px">
<div class="a" style="left:78px;top:491px;width:660px;height:40px;border-left:1px solid #e6e6e6;border-right:1px solid #e6e6e6;background:linear-gradient(to bottom,#fff 0,#fff 18px,#f3f3f3 32px,#e4e4e4 39px)"></div>
<div class="a" style="left:78px;top:491px;width:3px;height:2px;background:#d8503a"></div>
<div class="a" style="left:148px;top:497px;font-size:12px;line-height:13px"><i>常</i><i>用</i><i>关</i><i>键</i><i>词</i><i>：</i></div>
<div class="a" style="left:225px;top:497px;font-size:12px;line-height:13px;font-family:'Liberation Mono',monospace;letter-spacing:-0.5px;text-decoration:underline;color:#333">iis</div>
<div class="a" style="left:259px;top:497px;font-size:12px;line-height:13px;font-family:'Liberation Mono',monospace;letter-spacing:-1.2px;text-decoration:underline;color:#333">framework</div>
<div class="a" style="left:329px;top:497px;font-size:12px;line-height:13px;text-decoration:underline;color:#333"><i>安</i><i>装</i></div>
<div class="a" style="left:369px;top:497px;font-size:12px;line-height:13px;text-decoration:underline;color:#333"><i>权</i><i>限</i></div>
<div class="a" style="left:409px;top:497px;font-size:12px;line-height:13px;text-decoration:underline;color:#333"><i>数</i><i>据</i><i>库</i></div>
<div class="a" style="left:461px;top:497px;font-size:12px;line-height:13px;text-decoration:underline;color:#333"><i>标</i><i>签</i></div>

<div class="a" style="left:83px;top:549px;font-size:12px;line-height:13px;font-weight:bold;color:#222"><i>新</i><i>手</i><i>向</i><i>导</i></div>
<div class="a" style="left:147px;top:549px;font-size:12px;line-height:13px;color:#777"><i>第</i><i>一</i><i>次</i><i>建</i><i>站</i><i>，</i><i>新</i><i>手</i><i>必</i><i>看</i></div>
<div class="a" style="left:78px;top:571px;width:670px;height:1px;background:#e6e6e6"></div>

<svg class="a" style="left:78px;top:578px" width="74" height="72" viewBox="0 0 74 72">
<circle cx="24" cy="15.7" r="10" fill="#f0ae2a"/>
<path d="M7,34 Q7,31 10,31 Q24,29.5 37.5,31 L23.5,60 Q22.5,63 23,65.5 Q17,66 13.5,64 Q10,62 9,55 Z" fill="#3d7dc8"/>
<path d="M47,27.5 L67,64 L28,64 Z" fill="#f0ae2a" stroke="#f0ae2a" stroke-width="4" stroke-linejoin="round"/>
<path d="M39.8,45 Q39.8,39 46,39 Q52,39 52,44.5 Q52,48 48.5,50.5 Q46,52 46,56" stroke="#fff" stroke-width="4.2" fill="none"/>
<circle cx="46" cy="61.5" r="2.6" fill="#fff"/>
</svg>

<div class="bul" style="left:178px;top:588px"></div><div class="lk" style="left:186px;top:581px"><span style="letter-spacing:0.45px">Pageadmin</span><i>安</i><i>装</i><i>要</i><i>求</i><i>及</i><i>配</i><i>置</i><i>步</i><i>骤</i></div>
<div class="bul" style="left:178px;top:611px"></div><div class="lk" style="left:186px;top:604px"><span style="letter-spacing:0.9px">net FrameWork2.0</span><i>安</i><i>装</i></div>
<div class="bul" style="left:178px;top:634px"></div><div class="lk" style="left:186px;top:627px"><i>后</i><i>台</i><i>登</i><i>陆</i><i>及</i><i>管</i><i>理</i><i>密</i><i>码</i><i>修</i><i>改</i></div>
<div class="bul" style="left:178px;top:657px"></div><div class="lk" style="left:186px;top:650px"><i>网</i><i>站</i><i>参</i><i>数</i><i>设</i><i>置</i></div>
<div class="bul" style="left:460px;top:588px"></div><div class="lk" style="left:468px;top:581px"><span style="letter-spacing:0.8px">IIS</span><i>安</i><i>装</i><i>教</i><i>程</i></div>
<div class="bul" style="left:460px;top:611px"></div><div class="lk" style="left:468px;top:604px"><span style="letter-spacing:0.8px">iis</span><i>的</i><span style="letter-spacing:0.8px">web</span><i>站</i><i>点</i><i>配</i><i>置</i></div>
<div class="bul" style="left:460px;top:634px"></div><div class="lk" style="left:468px;top:627px"><i>后</i><i>台</i><i>站</i><i>点</i><i>的</i><i>增</i><i>加</i><i>及</i><i>管</i><i>理</i></div>
<div class="bul" style="left:460px;top:657px"></div><div class="lk" style="left:468px;top:650px"><i>网</i><i>站</i><i>栏</i><i>目</i><i>的</i><i>增</i><i>加</i><i>及</i><i>管</i><i>理</i></div>

<!-- right sidebar -->
<div class="a" style="left:759px;top:491px;width:219px;height:198px;border-left:1px solid #c9dbee;border-right:1px solid #c9dbee"></div>
<div class="a" style="left:773px;top:479px;font-size:13px;line-height:15px;font-weight:bold;color:#1f5aa8"><i>使</i><i>用</i><i>教</i><i>程</i></div>
<div class="a" style="left:768px;top:498px;width:200px;height:1px;border-top:1px dotted #c4c4c4"></div>
<div class="a" style="left:773px;top:506px;font-size:12px;line-height:19px;color:#555;white-space:nowrap"><i>对</i><i>系</i><i>统</i><i>的</i><i>环</i><i>境</i><i>配</i><i>置</i><i>、</i><i>安</i><i>装</i><i>、</i><i>功</i><i>能</i><i>进</i><i>行</i><br><i>逐</i><i>步</i><i>的</i><i>说</i><i>明</i></div>
<div class="a" style="left:773px;top:553px;font-size:13px;line-height:15px;font-weight:bold;color:#1f5aa8"><i>常</i><i>用</i><i>文</i><i>档</i></div>
<div class="a" style="left:768px;top:572px;width:200px;height:1px;border-top:1px dotted #c4c4c4"></div>
<div class="a" style="left:773px;top:580px;font-size:12px;line-height:19px;color:#555;white-space:nowrap"><i>常</i><i>用</i><i>设</i><i>置</i><i>、</i><i>修</i><i>改</i><i>、</i><i>数</i><i>据</i><i>库</i><i>操</i><i>作</i><i>说</i><i>明</i><i>等</i></div>
<div class="a" style="left:773px;top:608px;font-size:13px;line-height:15px;font-weight:bold;color:#1f5aa8"><i>常</i><i>见</i><i>问</i><i>题</i></div>
<div class="a" style="left:768px;top:627px;width:200px;height:1px;border-top:1px dotted #c4c4c4"></div>
<div class="a" style="left:773px;top:635px;font-size:12px;line-height:19px;color:#555;white-space:nowrap"><i>系</i><i>统</i><i>安</i><i>装</i><i>使</i><i>用</i><i>中</i><i>常</i><i>见</i><i>的</i><i>错</i><i>误</i><i>原</i><i>因</i><i>分</i><i>析</i><br><i>及</i><i>解</i><i>决</i></div>
<div class="a" style="left:773px;top:682px;font-size:13px;line-height:15px;font-weight:bold;color:#1f5aa8">SEO<i>教</i><i>程</i></div>

<!-- scrollbar -->
<div class="a" style="left:1154px;top:491px;width:12px;height:198px;background:#f3f1ec;border-left:1px solid #e8e6df"></div>
<div class="a" style="left:1155px;top:492px;width:14px;height:16px;border:1px solid #b3c5ee;border-radius:2px;background:linear-gradient(135deg,#e0e8fc,#c2d2f8)"><svg class="a" style="left:1px;top:3px" width="12" height="9"><path d="M2,7 L6,3 L10,7" stroke="#4d6185" stroke-width="2" fill="none"/></svg></div>
<div class="a" style="left:1155px;top:624px;width:14px;height:80px;border:1px solid #fff;outline:1px solid #b7c8f0;border-radius:2px;background:linear-gradient(to right,#c9d8fb,#bccdf7)"></div>

</div></div>
</body></html>
